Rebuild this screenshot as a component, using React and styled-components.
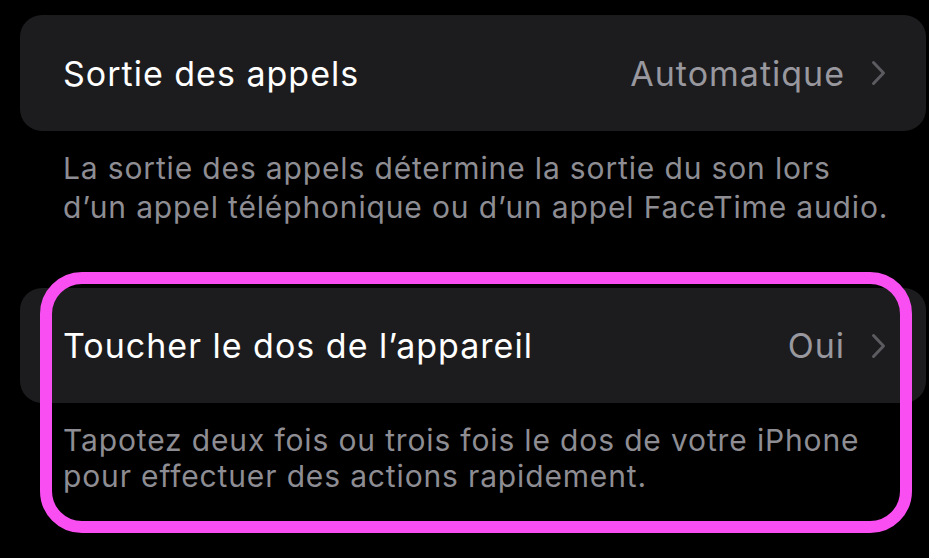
import React from "react";
import styled, { createGlobalStyle } from "styled-components";

const Global = createGlobalStyle`
  html, body { margin: 0; padding: 0; background: #000; }
  body { font-family: Inter, "Noto Sans", sans-serif; -webkit-font-smoothing: antialiased; }
  #root { width: 929px; height: 558px; overflow: hidden; background: #000; }
`;

const Page = styled.div`
  display: flex;
  flex-direction: column;
  padding: 15px 3px 0 20px;
`;

const Section = styled.section`
  position: relative;
  display: flex;
  flex-direction: column;
  margin-top: ${(p) => p.$top || 0}px;
`;

const Card = styled.div`
  background: #1c1c1e;
  border-radius: 22px;
  height: ${(p) => p.$h}px;
  display: flex;
  align-items: center;
  padding: 0 40px 0 43px;
`;

const Title = styled.span`
  flex: 1;
  color: #fff;
  font-size: 34px;
  letter-spacing: 1px;
`;

const Value = styled.span`
  color: #98989e;
  font-size: 34px;
  letter-spacing: 1px;
  margin-right: 26px;
`;

const Chevron = styled.svg`
  width: 15px;
  height: 26px;
  display: block;
`;

const Footer = styled.p`
  margin: ${(p) => p.$mt}px 0 0 43px;
  color: #8d8d93;
  font-size: 30px;
  letter-spacing: 0.85px;
  line-height: ${(p) => p.$lh}px;
  white-space: nowrap;
`;

const Highlight = styled.div`
  position: absolute;
  left: 20px;
  top: -16px;
  width: 872px;
  height: 261px;
  box-sizing: border-box;
  border: 12px solid #f94ff2;
  border-radius: 42px;
  pointer-events: none;
`;

const ChevronIcon = () => (
  <Chevron viewBox="0 0 15 26">
    <path d="M2.5 2.5 L12.5 13 L2.5 23.5" fill="none" stroke="#5b5b60" strokeWidth="3" strokeLinecap="round" strokeLinejoin="round" />
  </Chevron>
);

export default function App() {
  return (
    <>
      <Global />
      <Page>
        <Section>
          <Card $h={116}>
            <Title>Sortie des appels</Title>
            <Value>Automatique</Value>
            <ChevronIcon />
          </Card>
          <Footer $mt={18} $lh={39}>
            La sortie des appels détermine la sortie du son lors
            <br />
            d’un appel téléphonique ou d’un appel FaceTime audio.
          </Footer>
        </Section>
        <Section $top={61}>
          <Card $h={115}>
            <Title>Toucher le dos de l’appareil</Title>
            <Value>Oui</Value>
            <ChevronIcon />
          </Card>
          <Footer $mt={19} $lh={36}>
            Tapotez deux fois ou trois fois le dos de votre iPhone
            <br />
            pour effectuer des actions rapidement.
          </Footer>
          <Highlight />
        </Section>
      </Page>
    </>
  );
}
